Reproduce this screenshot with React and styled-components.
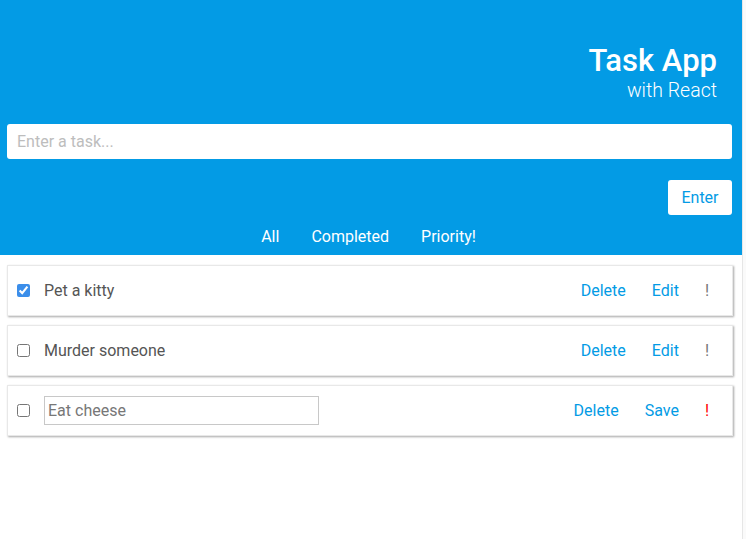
import React, { useState } from "react";
import styled, { createGlobalStyle } from "styled-components";

const Global = createGlobalStyle`
  html, body { margin: 0; padding: 0; background: #fff; }
  body { font-family: Roboto, "Noto Sans", sans-serif; }
  * { box-sizing: border-box; }
`;

const Shell = styled.div`
  display: flex;
  min-height: 539px;
`;

const Main = styled.div`
  flex: 1;
  min-width: 0;
`;

const Gutter = styled.div`
  width: 4px;
  border-left: 1px solid #e6e6e6;
  background: #fafafa;
`;

const Header = styled.header`
  background: #039be5;
  height: 255px;
  padding: 43px 10px 0 7px;
  display: flex;
  flex-direction: column;
`;

const Brand = styled.div`
  display: flex;
  flex-direction: column;
  align-items: flex-end;
  padding-right: 15px;
  color: #fff;
`;

const Title = styled.h1`
  margin: 0;
  font-size: 31px;
  line-height: 36px;
  font-weight: 500;
`;

const Subtitle = styled.div`
  font-size: 19.5px;
  line-height: 23px;
  font-weight: 300;
`;

const TaskInput = styled.input`
  margin-top: 22px;
  width: 100%;
  height: 35px;
  border: none;
  border-radius: 3px;
  padding: 0 10px;
  font-family: inherit;
  font-size: 16px;
  color: #444;
  outline: none;
  &::placeholder { color: #bdbdbd; }
`;

const EnterRow = styled.div`
  display: flex;
  justify-content: flex-end;
  margin-top: 21px;
`;

const EnterButton = styled.button`
  height: 35px;
  width: 64px;
  border: none;
  border-radius: 3px;
  background: #fff;
  color: #039be5;
  font-family: inherit;
  font-size: 16px;
`;

const Nav = styled.nav`
  display: flex;
  justify-content: center;
  margin-top: 11px;
  padding-right: 2px;
`;

const NavItem = styled.a`
  color: #fff;
  font-size: 16px;
  line-height: 22px;
  padding: 0 16px;
  text-decoration: none;
`;

const List = styled.ul`
  list-style: none;
  margin: 0;
  padding: 10px 9px 0 7px;
  display: flex;
  flex-direction: column;
  gap: 9px;
`;

const Card = styled.li`
  height: 51px;
  background: #fff;
  border: 1px solid #e8e8e8;
  box-shadow: 1px 1px 2px rgba(0, 0, 0, 0.35);
  display: flex;
  align-items: center;
  padding: 0 0 0 9px;
`;

const Check = styled.input`
  margin: 0 14px 0 0;
  width: 13px;
  height: 13px;
  accent-color: #3b8eea;
`;

const TaskText = styled.span`
  flex: 1;
  font-size: 16px;
  color: #555;
`;

const EditField = styled.div`
  flex: 1;
`;

const EditInput = styled.input`
  width: 275px;
  height: 29px;
  border: 1px solid #c8c8c8;
  padding: 0 3px;
  font-family: inherit;
  font-size: 16px;
  color: #777;
  outline: none;
`;

const Action = styled.button`
  border: none;
  background: none;
  font-family: inherit;
  font-size: 16px;
  color: #039be5;
  padding: 0 13px;
  height: 30px;
`;

const Bang = styled(Action)`
  color: ${(p) => (p.$on ? "#ff0000" : "#777")};
  padding: 0 23px 0 13px;
`;

const tasks = [
  { id: 1, text: "Pet a kitty", done: true, editing: false, priority: false },
  { id: 2, text: "Murder someone", done: false, editing: false, priority: false },
  { id: 3, text: "Eat cheese", done: false, editing: true, priority: true },
];

export default function App() {
  const [items] = useState(tasks);
  return (
    <>
      <Global />
      <Shell>
        <Main>
          <Header>
            <Brand>
              <Title>Task App</Title>
              <Subtitle>with React</Subtitle>
            </Brand>
            <TaskInput placeholder="Enter a task..." />
            <EnterRow>
              <EnterButton>Enter</EnterButton>
            </EnterRow>
            <Nav>
              <NavItem>All</NavItem>
              <NavItem>Completed</NavItem>
              <NavItem>Priority!</NavItem>
            </Nav>
          </Header>
          <List>
            {items.map((t) => (
              <Card key={t.id}>
                <Check type="checkbox" defaultChecked={t.done} />
                {t.editing ? (
                  <EditField>
                    <EditInput defaultValue={t.text} />
                  </EditField>
                ) : (
                  <TaskText>{t.text}</TaskText>
                )}
                <Action>Delete</Action>
                <Action>{t.editing ? "Save" : "Edit"}</Action>
                <Bang $on={t.priority}>!</Bang>
              </Card>
            ))}
          </List>
        </Main>
        <Gutter />
      </Shell>
    </>
  );
}
